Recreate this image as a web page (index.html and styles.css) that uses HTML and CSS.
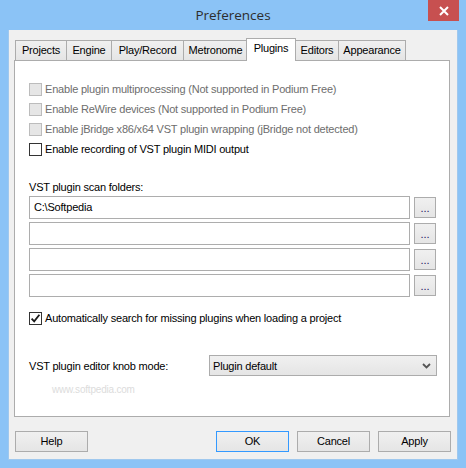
FILE: index.html
```html
<!DOCTYPE html>
<html>
<head>
<meta charset="utf-8">
<title>Preferences</title>
<link rel="stylesheet" href="styles.css">
</head>
<body>
<div class="window">
  <div class="titlebar">
    <div class="title-spacer"></div>
    <div class="title">Preferences</div>
    <div class="title-controls">
      <div class="close">
        <svg width="10" height="10" viewBox="0 0 10 10"><path d="M1 1 L9 9 M9 1 L1 9" stroke="#fff" stroke-width="2" fill="none"/></svg>
      </div>
    </div>
  </div>
  <div class="client">
    <div class="tabs">
      <div class="tab tab-projects">Projects</div>
      <div class="tab tab-engine">Engine</div>
      <div class="tab tab-play">Play/Record</div>
      <div class="tab tab-metronome">Metronome</div>
      <div class="tab tab-plugins active">Plugins</div>
      <div class="tab tab-editors">Editors</div>
      <div class="tab tab-appearance">Appearance</div>
    </div>
    <div class="panel">
      <div class="check-row disabled"><span class="box"></span><span>Enable plugin multiprocessing (Not supported in Podium Free)</span></div>
      <div class="check-row disabled"><span class="box"></span><span>Enable ReWire devices (Not supported in Podium Free)</span></div>
      <div class="check-row disabled"><span class="box"></span><span>Enable jBridge x86/x64 VST plugin wrapping (jBridge not detected)</span></div>
      <div class="check-row"><span class="box"></span><span>Enable recording of VST plugin MIDI output</span></div>

      <div class="label">VST plugin scan folders:</div>
      <div class="folder-row"><div class="field">C:\Softpedia</div><div class="dots">...</div></div>
      <div class="folder-row"><div class="field"></div><div class="dots">...</div></div>
      <div class="folder-row"><div class="field"></div><div class="dots">...</div></div>
      <div class="folder-row"><div class="field"></div><div class="dots">...</div></div>

      <div class="check-row auto"><span class="box checked"><svg width="11" height="11" viewBox="0 0 11 11"><path d="M1.6 5.6 L4.2 8.4 L9.4 1.8" stroke="#1a1a1a" stroke-width="1.8" fill="none"/></svg></span><span>Automatically search for missing plugins when loading a project</span></div>

      <div class="select-row">
        <span>VST plugin editor knob mode:</span>
        <div class="select"><span>Plugin default</span>
          <svg width="9" height="6" viewBox="0 0 9 6"><path d="M1 1 L4.5 4.5 L8 1" stroke="#555" stroke-width="1.8" fill="none"/></svg>
        </div>
      </div>
      <div class="watermark">www.softpedia.com</div>
    </div>
    <div class="buttons">
      <div class="btn">Help</div>
      <div class="spacer"></div>
      <div class="btn default">OK</div>
      <div class="btn">Cancel</div>
      <div class="btn">Apply</div>
    </div>
  </div>
</div>
</body>
</html>
```
FILE: styles.css
```css
* { box-sizing: border-box; }
html, body { margin: 0; padding: 0; }
body {
  width: 466px;
  height: 468px;
  overflow: hidden;
  font-family: "Liberation Sans", Arial, sans-serif;
  font-size: 11px;
  letter-spacing: -0.2px;
  color: #000;
}
.window {
  width: 466px;
  height: 468px;
  background: #8bc3f6;
  display: flex;
  flex-direction: column;
}
.titlebar {
  height: 30px;
  display: grid;
  grid-template-columns: 1fr auto 1fr;
  align-items: start;
}
.title {
  font-family: "Open Sans", "Noto Sans", sans-serif;
  font-size: 13.5px;
  letter-spacing: 0;
  color: #2d2d2d;
  line-height: 30px;
}
.title-controls {
  display: flex;
  justify-content: flex-end;
  padding-right: 7px;
}
.close {
  width: 31px;
  height: 21px;
  background: #c75050;
  display: flex;
  align-items: center;
  justify-content: center;
}
.client {
  margin: 0 8px;
  height: 430px;
  background: #f0f0f0;
  border: 1px solid #9fc8ee;
  border-top: none;
  display: flex;
  flex-direction: column;
}
.tabs {
  margin-top: 8px;
  padding-left: 6px;
  height: 22px;
  display: flex;
  align-items: flex-end;
  position: relative;
  z-index: 1;
}
.tab {
  height: 20px;
  padding: 0;
  text-align: center;
  line-height: 18px;
  border: 1px solid #acacac;
  border-bottom: none;
  background: linear-gradient(#f0f0f0, #e5e5e5);
  margin-left: -1px;
  white-space: nowrap;
  flex: none;
}
.tab:first-child { margin-left: 0; }
.tab-projects { width: 52px; }
.tab-engine { width: 46px; }
.tab-play { width: 73px; }
.tab-metronome { width: 65px; }
.tab-plugins { width: 50px; }
.tab-editors { width: 44px; }
.tab-appearance { width: 68px; }
.tab.active {
  height: 23px;
  margin-bottom: -1px;
  margin-left: -2px;
  line-height: 19px;
  background: #fff;
  position: relative;
  z-index: 2;
}
.panel {
  margin-left: 5px;
  width: 436px;
  height: 357px;
  background: #fff;
  border: 1px solid #acacac;
  padding: 18px 13px 0 14px;
  display: flex;
  flex-direction: column;
}
.check-row {
  height: 20px;
  display: flex;
  align-items: center;
  gap: 3px;
  white-space: nowrap;
}
.box {
  width: 13px;
  height: 13px;
  border: 1px solid #333;
  background: #fff;
  display: flex;
  align-items: center;
  justify-content: center;
  flex: none;
}
.check-row.disabled { color: #6d6d6d; }
.check-row.disabled .box {
  border-color: #bcbcbc;
  background: #e6e6e6;
}
.label {
  margin-top: 20px;
  line-height: 16px;
  margin-bottom: 1px;
}
.folder-row {
  display: flex;
  align-items: center;
  gap: 4px;
  margin-bottom: 3px;
}
.field {
  width: 381px;
  height: 23px;
  border: 1px solid #adadad;
  background: #fff;
  padding-left: 4px;
  line-height: 21px;
}
.dots {
  width: 22px;
  height: 21px;
  border: 1px solid #acacac;
  background: linear-gradient(#f0f0f0, #e5e5e5);
  text-align: center;
  line-height: 21px;
  letter-spacing: 0;
  color: #1a1660;
}
.check-row.auto { margin-top: 8px; }
.select-row {
  margin-top: 27px;
  height: 21px;
  display: flex;
  align-items: center;
  justify-content: space-between;
}
.select {
  width: 228px;
  height: 21px;
  margin-right: -1px;
  border: 1px solid #acacac;
  background: linear-gradient(#f0f0f0, #e5e5e5);
  display: flex;
  align-items: center;
  justify-content: space-between;
  padding: 0 5px 0 3px;
}
.watermark {
  margin-top: 8px;
  padding-left: 23px;
  font-size: 10px;
  color: #dcdcdc;
}
.buttons {
  margin-top: 14px;
  padding: 0 6px;
  display: flex;
  gap: 8px;
}
.spacer { flex: 1; }
.btn {
  width: 73px;
  height: 21px;
  border: 1px solid #acacac;
  background: linear-gradient(#f0f0f0, #e5e5e5);
  text-align: center;
  line-height: 19px;
}
.btn.default { border-color: #3399ff; }
```
